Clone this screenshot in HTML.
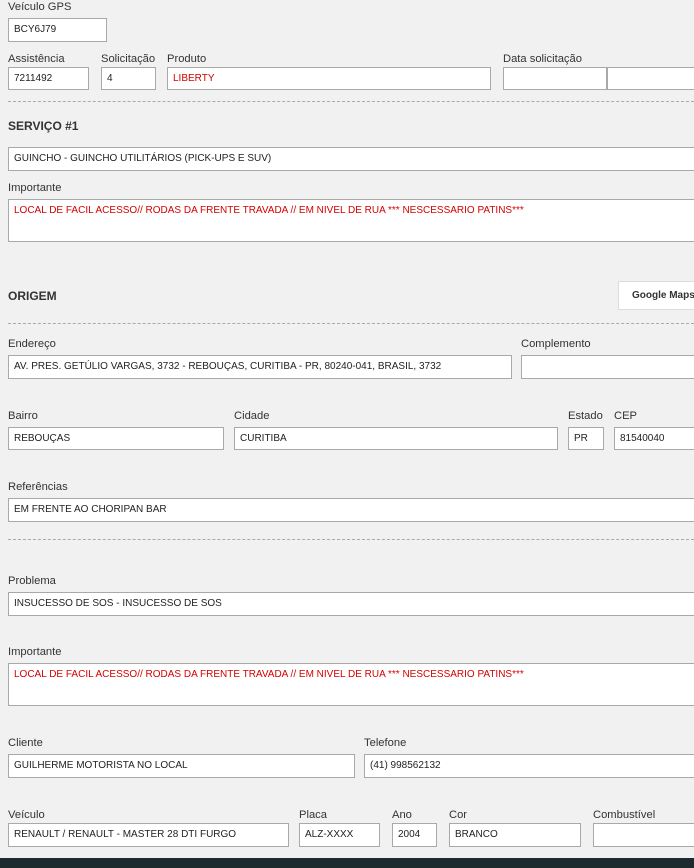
<!DOCTYPE html>
<html><head><meta charset="utf-8"><style>
*{box-sizing:border-box;margin:0;padding:0}
body{width:694px;height:868px;overflow:hidden;background:#f1f1f1;position:relative;font-family:"Liberation Sans",sans-serif;color:#333}
.l{position:absolute;font-size:11.2px;color:#333;line-height:14px;white-space:nowrap}
.i{position:absolute;background:#fff;border:1px solid #a9a9a9;font-size:10px;line-height:22px;padding-left:5px;color:#222;white-space:nowrap;overflow:hidden}
.r{color:#d40000}
.t{line-height:14px;padding-top:4px}
.h{position:absolute;font-weight:bold;font-size:12px;color:#333}
.d{position:absolute;left:8px;right:0;border-top:1px dashed #aaa}
</style></head><body>
<div class="l" style="left:8px;top:0">Veículo GPS</div>
<div class="i" style="left:8px;top:18px;width:99px;height:24px">BCY6J79</div>
<div class="l" style="left:8px;top:52px">Assistência</div>
<div class="l" style="left:101px;top:52px">Solicitação</div>
<div class="l" style="left:167px;top:52px">Produto</div>
<div class="l" style="left:503px;top:52px">Data solicitação</div>
<div class="i" style="left:8px;top:67px;width:81px;height:23px">7211492</div>
<div class="i" style="left:101px;top:67px;width:55px;height:23px">4</div>
<div class="i r" style="left:167px;top:67px;width:324px;height:23px">LIBERTY</div>
<div class="i" style="left:503px;top:67px;width:104px;height:23px"></div>
<div class="i" style="left:607px;top:67px;width:100px;height:23px"></div>
<div class="d" style="top:101px"></div>
<div class="h" style="top:119px;left:8px">SERVIÇO #1</div>
<div class="i" style="left:8px;top:147px;width:700px;height:24px">GUINCHO - GUINCHO UTILITÁRIOS (PICK-UPS E SUV)</div>
<div class="l" style="left:8px;top:181px">Importante</div>
<div class="i r t" style="left:8px;top:199px;width:700px;height:43px">LOCAL DE FACIL ACESSO// RODAS DA FRENTE TRAVADA // EM NIVEL DE RUA *** NESCESSARIO PATINS***</div>
<div class="h" style="top:289px;left:8px">ORIGEM</div>
<div style="position:absolute;left:618px;top:281px;width:90px;height:29px;background:#fff;border:1px solid #ddd;font-size:10px;font-weight:bold;line-height:27px;padding-left:13px;color:#333">Google Maps</div>
<div class="d" style="top:323px"></div>
<div class="l" style="left:8px;top:337px">Endereço</div>
<div class="l" style="left:521px;top:337px">Complemento</div>
<div class="i" style="left:8px;top:355px;width:504px;height:24px">AV. PRES. GETÚLIO VARGAS, 3732 - REBOUÇAS, CURITIBA - PR, 80240-041, BRASIL, 3732</div>
<div class="i" style="left:521px;top:355px;width:190px;height:24px"></div>
<div class="l" style="left:8px;top:409px">Bairro</div>
<div class="l" style="left:234px;top:409px">Cidade</div>
<div class="l" style="left:568px;top:409px">Estado</div>
<div class="l" style="left:614px;top:409px">CEP</div>
<div class="i" style="left:8px;top:427px;width:216px;height:23px">REBOUÇAS</div>
<div class="i" style="left:234px;top:427px;width:324px;height:23px">CURITIBA</div>
<div class="i" style="left:568px;top:427px;width:36px;height:23px">PR</div>
<div class="i" style="left:614px;top:427px;width:100px;height:23px">81540040</div>
<div class="l" style="left:8px;top:480px">Referências</div>
<div class="i" style="left:8px;top:498px;width:700px;height:24px">EM FRENTE AO CHORIPAN BAR</div>
<div class="d" style="top:539px"></div>
<div class="l" style="left:8px;top:574px">Problema</div>
<div class="i" style="left:8px;top:592px;width:700px;height:24px">INSUCESSO DE SOS - INSUCESSO DE SOS</div>
<div class="l" style="left:8px;top:645px">Importante</div>
<div class="i r t" style="left:8px;top:663px;width:700px;height:43px">LOCAL DE FACIL ACESSO// RODAS DA FRENTE TRAVADA // EM NIVEL DE RUA *** NESCESSARIO PATINS***</div>
<div class="l" style="left:8px;top:736px">Cliente</div>
<div class="l" style="left:364px;top:736px">Telefone</div>
<div class="i" style="left:8px;top:754px;width:347px;height:24px">GUILHERME MOTORISTA NO LOCAL</div>
<div class="i" style="left:364px;top:754px;width:350px;height:24px">(41) 998562132</div>
<div class="l" style="left:8px;top:808px">Veículo</div>
<div class="l" style="left:299px;top:808px">Placa</div>
<div class="l" style="left:392px;top:808px">Ano</div>
<div class="l" style="left:449px;top:808px">Cor</div>
<div class="l" style="left:593px;top:808px">Combustível</div>
<div class="i" style="left:8px;top:823px;width:281px;height:24px">RENAULT / RENAULT - MASTER 28 DTI FURGO</div>
<div class="i" style="left:299px;top:823px;width:81px;height:24px">ALZ-XXXX</div>
<div class="i" style="left:392px;top:823px;width:45px;height:24px">2004</div>
<div class="i" style="left:449px;top:823px;width:132px;height:24px">BRANCO</div>
<div class="i" style="left:593px;top:823px;width:120px;height:24px"></div>
<div style="position:absolute;left:0;top:858px;width:694px;height:10px;background:#1e2b2e"></div>
</body></html>
